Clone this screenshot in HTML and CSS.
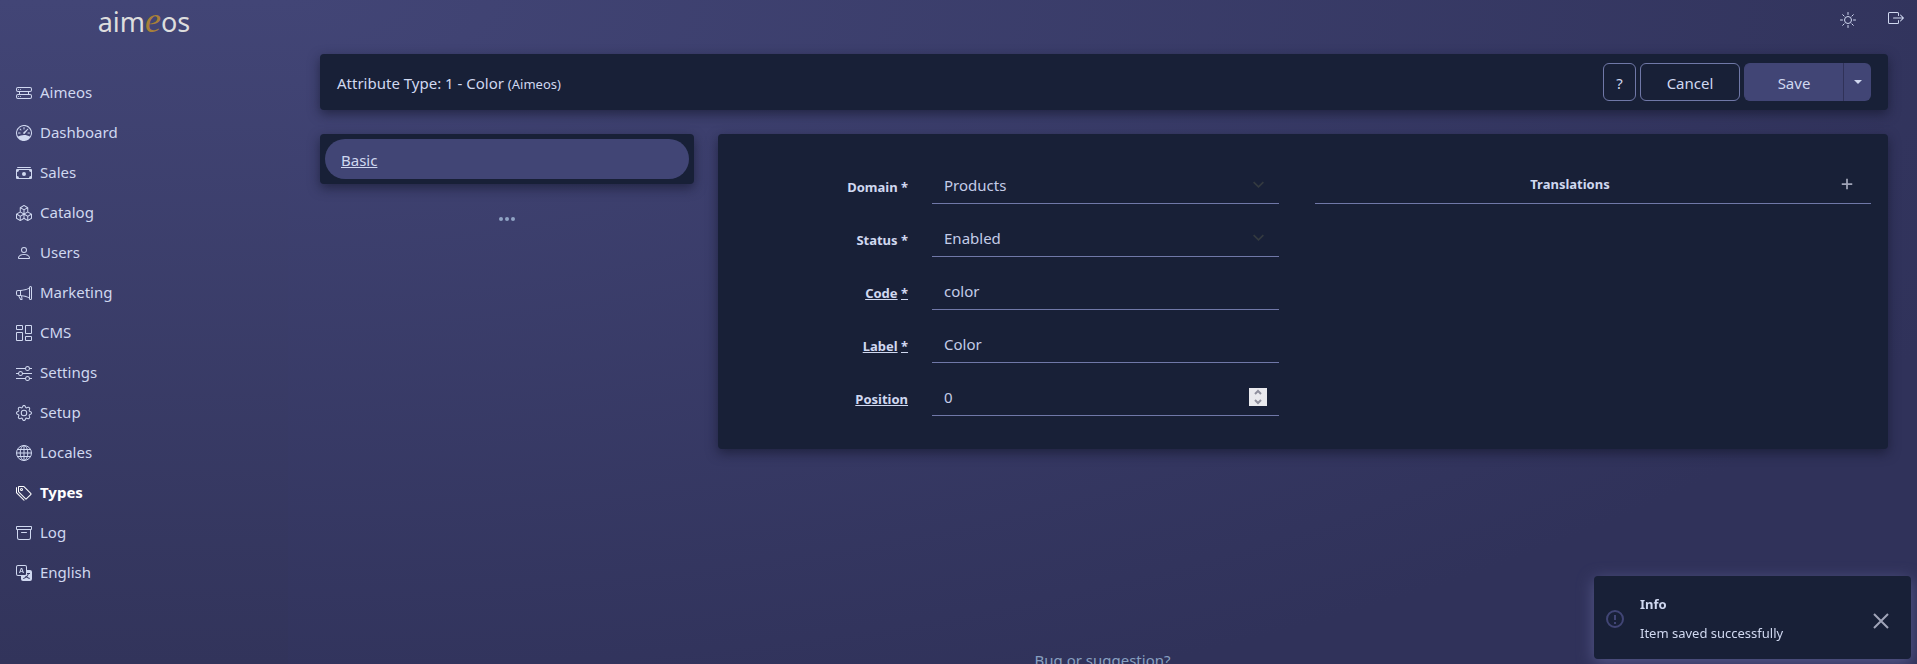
FILE: index.html
```
<!DOCTYPE html>
<html lang="en">
<head>
    <meta charset="UTF-8">
    <meta name="viewport" content="width=device-width, initial-scale=1.0">
    <title>Attribute Type: 1 - Color</title>
    <link rel="stylesheet" href="styles.css">
</head>
<body>
    <div class="app">
        <aside class="sidebar">
            <a class="logo" href="#">aim<em>e</em>os</a>
            <nav class="menu">
                <a href="#"><svg class="icon" viewBox="0 0 16 16"><path d="M4.5 5a.5.5 0 1 0 0-1 .5.5 0 0 0 0 1M3 4.5a.5.5 0 1 1-1 0 .5.5 0 0 1 1 0m2 7a.5.5 0 1 1-1 0 .5.5 0 0 1 1 0m-2.5.5a.5.5 0 1 0 0-1 .5.5 0 0 0 0 1"/><path d="M2 2a2 2 0 0 0-2 2v1a2 2 0 0 0 2 2h1v2H2a2 2 0 0 0-2 2v1a2 2 0 0 0 2 2h12a2 2 0 0 0 2-2v-1a2 2 0 0 0-2-2h-1V7h1a2 2 0 0 0 2-2V4a2 2 0 0 0-2-2zm13 2v1a1 1 0 0 1-1 1H2a1 1 0 0 1-1-1V4a1 1 0 0 1 1-1h12a1 1 0 0 1 1 1m0 7v1a1 1 0 0 1-1 1H2a1 1 0 0 1-1-1v-1a1 1 0 0 1 1-1h12a1 1 0 0 1 1 1m-3-4v2H4V7z"/></svg>Aimeos</a>
                <a href="#"><svg class="icon" viewBox="0 0 16 16"><path d="M8 2a.5.5 0 0 1 .5.5V4a.5.5 0 0 1-1 0V2.5A.5.5 0 0 1 8 2M3.732 3.732a.5.5 0 0 1 .707 0l.915.914a.5.5 0 1 1-.708.708l-.914-.915a.5.5 0 0 1 0-.707M2 8a.5.5 0 0 1 .5-.5h1.586a.5.5 0 0 1 0 1H2.5A.5.5 0 0 1 2 8m9.5 0a.5.5 0 0 1 .5-.5h1.5a.5.5 0 0 1 0 1H12a.5.5 0 0 1-.5-.5m.754-4.246a.39.39 0 0 0-.527-.02L7.547 7.31A.91.91 0 1 0 8.85 8.569l3.434-4.297a.39.39 0 0 0-.029-.518z"/><path fill-rule="evenodd" d="M6.664 15.889A8 8 0 1 1 9.336.11a8 8 0 0 1-2.672 15.78zm-4.665-4.283A11.95 11.95 0 0 1 8 10c2.186 0 4.236.585 6.001 1.606a7 7 0 1 0-12.002 0"/></svg>Dashboard</a>
                <a href="#"><svg class="icon" viewBox="0 0 16 16"><path d="M1 3a1 1 0 0 1 1-1h12a1 1 0 0 1 1 1zm7 8a2 2 0 1 0 0-4 2 2 0 0 0 0 4"/><path d="M0 5a1 1 0 0 1 1-1h14a1 1 0 0 1 1 1v8a1 1 0 0 1-1 1H1a1 1 0 0 1-1-1zm3 0a2 2 0 0 1-2 2v4a2 2 0 0 1 2 2h10a2 2 0 0 1 2-2V7a2 2 0 0 1-2-2z"/></svg>Sales</a>
                <a href="#"><svg class="icon" viewBox="0 0 16 16"><path d="M7.752.066a.5.5 0 0 1 .496 0l3.75 2.143a.5.5 0 0 1 .252.434v3.995l3.498 2A.5.5 0 0 1 16 9.07v4.286a.5.5 0 0 1-.252.434l-3.75 2.143a.5.5 0 0 1-.496 0l-3.502-2-3.502 2.001a.5.5 0 0 1-.496 0l-3.75-2.143A.5.5 0 0 1 0 13.357V9.071a.5.5 0 0 1 .252-.434L3.75 6.638V2.643a.5.5 0 0 1 .252-.434zM4.25 7.504 1.508 9.071l2.742 1.567 2.742-1.567zM7.5 9.933l-2.75 1.571v3.134l2.75-1.571zm1 3.134 2.75 1.571v-3.134L8.5 9.933zm.508-3.996 2.742 1.567 2.742-1.567-2.742-1.567zm2.242-2.433V3.504L8.5 5.076V8.21zM7.5 8.21V5.076L4.75 3.504v3.134zM5.258 2.643 8 4.21l2.742-1.567L8 1.076zM15 9.933l-2.75 1.571v3.134L15 13.067zM3.75 14.638v-3.134L1 9.933v3.134z"/></svg>Catalog</a>
                <a href="#"><svg class="icon" viewBox="0 0 16 16"><path d="M8 8a3 3 0 1 0 0-6 3 3 0 0 0 0 6m2-3a2 2 0 1 1-4 0 2 2 0 0 1 4 0m4 8c0 1-1 1-1 1H3s-1 0-1-1 1-4 6-4 6 3 6 4m-1-.004c-.001-.246-.154-.986-.832-1.664C11.516 10.68 10.289 10 8 10s-3.516.68-4.168 1.332c-.678.678-.83 1.418-.832 1.664z"/></svg>Users</a>
                <a href="#"><svg class="icon" viewBox="0 0 16 16"><path d="M13 2.5a1.5 1.5 0 0 1 3 0v11a1.5 1.5 0 0 1-3 0v-.214c-2.162-1.241-4.49-1.843-6.912-2.083l.405 2.712A1 1 0 0 1 5.51 15.1h-.548a1 1 0 0 1-.916-.599l-1.85-3.49-.202-.003A2.014 2.014 0 0 1 0 9V7a2.02 2.02 0 0 1 1.992-2.013 75 75 0 0 0 2.483-.075c3.043-.154 6.148-.849 8.525-2.199zm1 0v11a.5.5 0 0 0 1 0v-11a.5.5 0 0 0-1 0m-1 1.35c-2.344 1.205-5.209 1.842-8 2.033v4.233q.27.015.537.036c2.568.189 5.093.744 7.463 1.993zm-9 6.215v-4.13a95 95 0 0 1-1.992.052A1.02 1.02 0 0 0 1 7v2c0 .55.448 1.002 1.006 1.009A61 61 0 0 1 4 10.065m-.657.975 1.609 3.037.01.024h.548l-.002-.014-.443-2.966a68 68 0 0 0-1.722-.082z"/></svg>Marketing</a>
                <a href="#"><svg class="icon" viewBox="0 0 16 16"><path d="M6 1v3H1V1zM1 0a1 1 0 0 0-1 1v3a1 1 0 0 0 1 1h5a1 1 0 0 0 1-1V1a1 1 0 0 0-1-1zm14 12v3h-5v-3zm-5-1a1 1 0 0 0-1 1v3a1 1 0 0 0 1 1h5a1 1 0 0 0 1-1v-3a1 1 0 0 0-1-1zM6 8v7H1V8zM1 7a1 1 0 0 0-1 1v7a1 1 0 0 0 1 1h5a1 1 0 0 0 1-1V8a1 1 0 0 0-1-1zm14-6v7h-5V1zm-5-1a1 1 0 0 0-1 1v7a1 1 0 0 0 1 1h5a1 1 0 0 0 1-1V1a1 1 0 0 0-1-1z"/></svg>CMS</a>
                <a href="#"><svg class="icon" viewBox="0 0 16 16"><path fill-rule="evenodd" d="M11.5 2a1.5 1.5 0 1 0 0 3 1.5 1.5 0 0 0 0-3M9.05 3a2.5 2.5 0 0 1 4.9 0H16v1h-2.05a2.5 2.5 0 0 1-4.9 0H0V3zM4.5 7a1.5 1.5 0 1 0 0 3 1.5 1.5 0 0 0 0-3M2.05 8a2.5 2.5 0 0 1 4.9 0H16v1H6.95a2.5 2.5 0 0 1-4.9 0H0V8zm9.45 4a1.5 1.5 0 1 0 0 3 1.5 1.5 0 0 0 0-3m-2.45 1a2.5 2.5 0 0 1 4.9 0H16v1h-2.05a2.5 2.5 0 0 1-4.9 0H0v-1z"/></svg>Settings</a>
                <a href="#"><svg class="icon" viewBox="0 0 16 16"><path d="M8 4.754a3.246 3.246 0 1 0 0 6.492 3.246 3.246 0 0 0 0-6.492M5.754 8a2.246 2.246 0 1 1 4.492 0 2.246 2.246 0 0 1-4.492 0"/><path d="M9.796 1.343c-.527-1.79-3.065-1.79-3.592 0l-.094.319a.873.873 0 0 1-1.255.52l-.292-.16c-1.64-.892-3.433.902-2.54 2.541l.159.292a.873.873 0 0 1-.52 1.255l-.319.094c-1.79.527-1.79 3.065 0 3.592l.319.094a.873.873 0 0 1 .52 1.255l-.16.292c-.892 1.64.901 3.434 2.541 2.54l.292-.159a.873.873 0 0 1 1.255.52l.094.319c.527 1.79 3.065 1.79 3.592 0l.094-.319a.873.873 0 0 1 1.255-.52l.292.16c1.64.893 3.434-.902 2.54-2.541l-.159-.292a.873.873 0 0 1 .52-1.255l.319-.094c1.79-.527 1.79-3.065 0-3.592l-.319-.094a.873.873 0 0 1-.52-1.255l.16-.292c.893-1.64-.902-3.433-2.541-2.54l-.292.159a.873.873 0 0 1-1.255-.52zm-2.633.283c.246-.835 1.428-.835 1.674 0l.094.319a1.873 1.873 0 0 0 2.693 1.115l.291-.16c.764-.415 1.6.42 1.184 1.185l-.159.292a1.873 1.873 0 0 0 1.116 2.692l.318.094c.835.246.835 1.428 0 1.674l-.319.094a1.873 1.873 0 0 0-1.115 2.693l.16.291c.415.764-.42 1.6-1.185 1.184l-.291-.159a1.873 1.873 0 0 0-2.693 1.116l-.094.318c-.246.835-1.428.835-1.674 0l-.094-.319a1.873 1.873 0 0 0-2.692-1.115l-.292.16c-.764.415-1.6-.42-1.184-1.185l.159-.291A1.873 1.873 0 0 0 1.945 8.93l-.319-.094c-.835-.246-.835-1.428 0-1.674l.319-.094A1.873 1.873 0 0 0 3.06 4.377l-.16-.292c-.415-.764.42-1.6 1.185-1.184l.292.159a1.873 1.873 0 0 0 2.692-1.115z"/></svg>Setup</a>
                <a href="#"><svg class="icon line" viewBox="0 0 16 16"><circle cx="8" cy="8" r="7.5"/><ellipse cx="8" cy="8" rx="3.8" ry="7.5"/><path d="M8 .5v15M.5 8h15M1.5 4.5h13M1.5 11.5h13"/></svg>Locales</a>
                <a class="active" href="#"><svg class="icon" viewBox="0 0 16 16"><path d="M3 2v4.586l7 7L14.586 9l-7-7zM2 2a1 1 0 0 1 1-1h4.586a1 1 0 0 1 .707.293l7 7a1 1 0 0 1 0 1.414l-4.586 4.586a1 1 0 0 1-1.414 0l-7-7A1 1 0 0 1 2 6.586z"/><path d="M5.5 5a.5.5 0 1 1 0-1 .5.5 0 0 1 0 1m0 1a1.5 1.5 0 1 0 0-3 1.5 1.5 0 0 0 0 3M1 7.086a1 1 0 0 0 .293.707L8.75 15.25l-.043.043a1 1 0 0 1-1.414 0l-7-7A1 1 0 0 1 0 7.586V3a1 1 0 0 1 1-1z"/></svg>Types</a>
                <a href="#"><svg class="icon" viewBox="0 0 16 16"><path d="M0 2a1 1 0 0 1 1-1h14a1 1 0 0 1 1 1v2a1 1 0 0 1-1 1v7.5a2.5 2.5 0 0 1-2.5 2.5h-9A2.5 2.5 0 0 1 1 12.5V5a1 1 0 0 1-1-1zm2 3v7.5A1.5 1.5 0 0 0 3.5 14h9a1.5 1.5 0 0 0 1.5-1.5V5zm13-3H1v2h14zM5 7.5a.5.5 0 0 1 .5-.5h5a.5.5 0 0 1 0 1h-5a.5.5 0 0 1-.5-.5"/></svg>Log</a>
                <a href="#"><svg class="icon" viewBox="0 0 16 16"><path d="M4.545 6.714 4.11 8H3l1.862-5h1.284L8 8H6.833l-.435-1.286zm1.634-.736L5.5 3.956h-.049l-.679 2.022z"/><path d="M0 2a2 2 0 0 1 2-2h7a2 2 0 0 1 2 2v3h3a2 2 0 0 1 2 2v7a2 2 0 0 1-2 2H7a2 2 0 0 1-2-2v-3H2a2 2 0 0 1-2-2zm2-1a1 1 0 0 0-1 1v7a1 1 0 0 0 1 1h7a1 1 0 0 0 1-1V2a1 1 0 0 0-1-1zm7.138 9.995q.289.451.63.846c-.748.575-1.673 1.001-2.768 1.292.178.217.451.635.555.867 1.125-.359 2.08-.844 2.886-1.494.777.665 1.739 1.165 2.93 1.472.133-.254.414-.673.629-.89-1.125-.253-2.057-.694-2.82-1.284.681-.747 1.222-1.651 1.621-2.757H14V8h-3v1.047h.765c-.318.844-.74 1.546-1.272 2.13a6 6 0 0 1-.415-.492 2 2 0 0 1-.94.31"/></svg>English</a>
            </nav>
        </aside>

        <main class="main">
            <div class="topbar">
                <button type="button" aria-label="Light mode"><svg class="icon line" viewBox="0 0 16 16"><circle cx="8" cy="8" r="3.5"/><path stroke-linecap="round" d="M8 .5v2M8 13.5v2M.5 8h2M13.5 8h2M2.7 2.7l1.4 1.4M11.9 11.9l1.4 1.4M2.7 13.3l1.4-1.4M11.9 4.1l1.4-1.4"/></svg></button>
                <a class="logout" href="#" aria-label="Logout"><svg class="icon" viewBox="0 0 16 16"><path d="M10 12.5a.5.5 0 0 1-.5.5h-8a.5.5 0 0 1-.5-.5v-9a.5.5 0 0 1 .5-.5h8a.5.5 0 0 1 .5.5v2a.5.5 0 0 0 1 0v-2A1.5 1.5 0 0 0 9.5 2h-8A1.5 1.5 0 0 0 0 3.5v9A1.5 1.5 0 0 0 1.5 14h8a1.5 1.5 0 0 0 1.5-1.5v-2a.5.5 0 0 0-1 0z"/><path d="M15.854 8.354a.5.5 0 0 0 0-.708l-3-3a.5.5 0 0 0-.708.708L14.293 7.5H5.5a.5.5 0 0 0 0 1h8.793l-2.147 2.146a.5.5 0 0 0 .708.708z"/></svg></a>
            </div>

            <div class="content">
                <div class="titlebar box">
                    <h1>Attribute Type: 1 - Color <small>(Aimeos)</small></h1>
                    <div class="actions">
                        <button class="btn help" type="button">?</button>
                        <button class="btn cancel" type="button">Cancel</button>
                        <div class="btn-group">
                            <button class="btn save" type="button">Save</button>
                            <button class="btn toggle" type="button" aria-label="More actions"><span class="caret"></span></button>
                        </div>
                    </div>
                </div>

                <div class="columns">
                    <div class="side">
                        <div class="tabs box">
                            <a href="#">Basic</a>
                        </div>
                        <button class="more" type="button" aria-label="More"><svg class="dots" viewBox="0 0 18 6"><circle cx="3" cy="3" r="2"/><circle cx="9" cy="3" r="2"/><circle cx="15" cy="3" r="2"/></svg></button>
                    </div>

                    <form class="panel box">
                        <div class="fields">
                            <div class="row">
                                <label for="domain">Domain *</label>
                                <div class="select">
                                    <select id="domain"><option>Products</option></select>
                                    <svg class="chevron" viewBox="0 0 16 16"><path d="m2 5 6 6 6-6"/></svg>
                                </div>
                            </div>
                            <div class="row">
                                <label for="status">Status *</label>
                                <div class="select">
                                    <select id="status"><option>Enabled</option></select>
                                    <svg class="chevron" viewBox="0 0 16 16"><path d="m2 5 6 6 6-6"/></svg>
                                </div>
                            </div>
                            <div class="row">
                                <label class="hint" for="code"><span>Code</span> <span>*</span></label>
                                <input type="text" id="code" value="color">
                            </div>
                            <div class="row">
                                <label class="hint" for="label"><span>Label</span> <span>*</span></label>
                                <input type="text" id="label" value="Color">
                            </div>
                            <div class="row">
                                <label class="hint" for="position"><span>Position</span></label>
                                <div class="number">
                                    <input type="number" id="position" value="0">
                                    <svg class="spin" viewBox="0 0 18 18"><path d="m6 6 3-3 3 3M6 12l3 3 3-3"/></svg>
                                </div>
                            </div>
                        </div>
                        <div class="translations">
                            <h2>Translations</h2>
                            <button type="button" aria-label="Add translation"><svg class="icon plus" viewBox="0 0 16 16"><path d="M8 2v12M2 8h12"/></svg></button>
                        </div>
                    </form>
                </div>
            </div>

            <footer class="footer"><a href="#">Bug or suggestion?</a></footer>
        </main>
    </div>

    <div class="toast" role="status">
        <svg class="info" viewBox="0 0 18 18"><circle cx="9" cy="9" r="8"/><path d="M9 5v5M9 12v2"/></svg>
        <div class="message">
            <strong>Info</strong>
            <span>Item saved successfully</span>
        </div>
        <button type="button" aria-label="Close"><svg class="icon close" viewBox="0 0 16 16"><path d="m1 1 14 14M15 1 1 15"/></svg></button>
    </div>
</body>
</html>
```
FILE: styles.css
```
* {
    box-sizing: border-box;
}

body {
    margin: 0;
    font-family: "Noto Sans", "Open Sans", sans-serif;
    font-size: 15px;
    line-height: 24px;
    color: #d0d8f0;
    background: #30325a;
}

a {
    color: inherit;
    text-decoration: none;
}

button {
    padding: 0;
    border: none;
    background: none;
    font: inherit;
    color: inherit;
}

.icon {
    display: block;
    width: 16px;
    height: 16px;
    fill: currentColor;
}

.line {
    fill: none;
    stroke: currentColor;
}

.app {
    display: flex;
    height: 100vh;
    overflow: hidden;
}

/* sidebar */
.sidebar {
    flex: none;
    width: 288px;
    background: linear-gradient(#424576, #32345b);
}

.logo {
    display: block;
    height: 44px;
    margin-bottom: 28px;
    font-size: 27px;
    line-height: 44px;
    text-align: center;
    color: #dddddd;
}

.logo em {
    font-family: "Liberation Serif", serif;
    font-size: 36px;
    line-height: 1;
    color: #a88038;
}

.menu a {
    display: flex;
    align-items: center;
    gap: 8px;
    height: 40px;
    padding: 0 16px;
}

.menu .icon {
    margin-top: 2px;
}

.menu .active {
    font-weight: bold;
    color: #ffffff;
}

/* main column */
.main {
    flex: 1;
    min-width: 0;
    background: radial-gradient(ellipse at top left, #424576, #30325a 80%);
}

.topbar {
    display: flex;
    justify-content: flex-end;
    align-items: center;
    gap: 32px;
    height: 38px;
    padding: 2px 13px 0 0;
}

.logout {
    margin-bottom: 4px;
}

.content {
    min-height: calc(100vh - 54px);
    padding: 16px 29px 16px 32px;
}

.box {
    border-radius: 4px;
    background: #182037;
    box-shadow: 0 4px 12px rgba(16, 20, 40, 0.6);
}

.titlebar {
    display: flex;
    align-items: center;
    justify-content: space-between;
    height: 56px;
    margin-bottom: 24px;
    padding: 0 17px;
}

.titlebar h1 {
    margin: 0;
    padding-top: 2px;
    font-size: 15px;
    font-weight: normal;
}

.titlebar small {
    font-size: 13px;
}

.actions {
    display: flex;
    gap: 4px;
}

.btn {
    height: 38px;
    padding-top: 2px;
    border: 1px solid #7078a8;
    border-radius: 6px;
}

.help {
    width: 33px;
}

.cancel {
    width: 100px;
}

.btn-group {
    display: flex;
}

.save {
    width: 100px;
    border-color: #414575;
    border-right-color: #303258;
    border-radius: 6px 0 0 6px;
    background: #414575;
}

.toggle {
    width: 27px;
    padding: 0 0 4px;
    border: none;
    border-radius: 0 6px 6px 0;
    background: #414575;
}

.caret {
    display: inline-block;
    border: 4px solid transparent;
    border-top-color: #d0d8f0;
    border-bottom: none;
    vertical-align: middle;
}

.columns {
    display: grid;
    grid-template-columns: 374fr 1170fr;
    gap: 24px;
    align-items: start;
}

.side {
    display: grid;
    gap: 25px;
}

.tabs {
    padding: 5px;
}

.tabs a {
    display: block;
    padding: 9px 16px 7px;
    border-radius: 20px;
    background: #414575;
    text-decoration: underline;
}

.more {
    justify-self: center;
    height: 20px;
}

.dots {
    display: block;
    width: 18px;
    height: 6px;
    fill: #90a4c4;
}

/* form */
.panel {
    display: grid;
    grid-template-columns: 1fr 1fr;
    gap: 36px;
    align-items: start;
    padding: 32px 17px 33px 5px;
}

.fields {
    display: grid;
    gap: 15px;
}

.row {
    display: grid;
    grid-template-columns: 8fr 15fr;
    gap: 24px;
    align-items: center;
}

.row label {
    padding-top: 4px;
    font-size: 13px;
    font-weight: bold;
    text-align: right;
}

.hint span {
    text-decoration: underline;
}

.row input,
.row select {
    display: block;
    width: 100%;
    height: 38px;
    padding: 1px 12px 0;
    border: none;
    border-bottom: 1px solid #7078a8;
    border-radius: 0;
    outline: none;
    background: none;
    font: inherit;
    color: #c4cce8;
    appearance: none;
}

.select,
.number {
    position: relative;
}

.row input::-webkit-inner-spin-button {
    appearance: none;
}

.chevron {
    position: absolute;
    top: 12px;
    right: 14px;
    width: 13px;
    height: 13px;
    fill: none;
    stroke: #343a40;
    stroke-width: 2;
}

.spin {
    position: absolute;
    top: 10px;
    right: 12px;
    width: 18px;
    height: 18px;
    background: #e9e9ed;
    fill: none;
    stroke: #8f8f9d;
    stroke-width: 2;
}

.translations {
    display: flex;
    align-items: center;
    height: 38px;
    padding: 0 17px 2px;
    border-bottom: 1px solid #7078a8;
}

.translations h2 {
    flex: 1;
    margin: 0;
    padding-right: 32px;
    font-size: 13px;
    text-align: center;
}

.plus,
.close {
    fill: none;
    stroke: #a0a4b8;
}

.plus {
    stroke-width: 2;
    width: 14px;
    height: 14px;
}

.footer {
    text-align: center;
    color: #88a0c0;
}

/* notification */
.toast {
    position: fixed;
    right: 6px;
    bottom: 5px;
    display: flex;
    align-items: center;
    gap: 16px;
    width: 317px;
    height: 83px;
    padding: 2px 22px 0 12px;
    border-radius: 4px;
    background: #182037;
    box-shadow: 0 4px 16px #56588a;
    font-size: 13px;
}

.info {
    width: 18px;
    height: 18px;
    fill: none;
    stroke: #414575;
    stroke-width: 2;
}

.message {
    display: grid;
    flex: 1;
    gap: 5px;
}

.close {
    margin-top: 4px;
    stroke-width: 2;
}
```
